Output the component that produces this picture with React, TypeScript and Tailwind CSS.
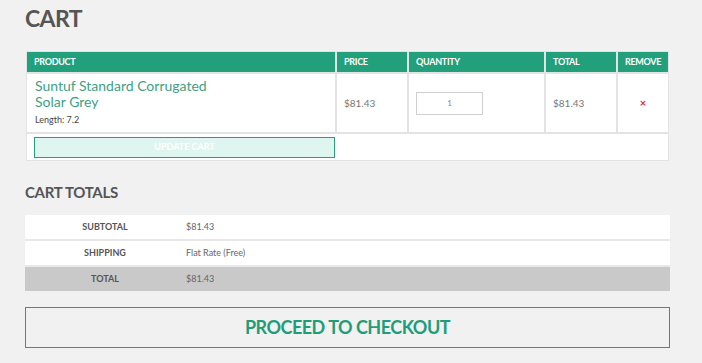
import React from "react";

const GREEN = "bg-[#21a07b]";

interface CartItem {
    name: string[];
    length: string;
    price: string;
    quantity: number;
    total: string;
}

const ITEM: CartItem = {
    name: ["Suntuf Standard Corrugated", "Solar Grey"],
    length: "7.2",
    price: "$81.43",
    quantity: 1,
    total: "$81.43",
};

const CAPTIONS = ["Product", "Price", "Quantity", "Total", "Remove"];

const TOTALS = [
    {label: "Subtotal", value: "$81.43", grey: false},
    {label: "Shipping", value: "Flat Rate (Free)", grey: false},
    {label: "Total", value: "$81.43", grey: true},
];

const CartTable = ({item}: {item: CartItem}) => {
    return <div className="grid grid-cols-[308px_70px_135px_70px_50px] grid-rows-[20px_58px_26px] gap-[2px] p-[1px] bg-[#e3e3e3] w-[643px]">
        {CAPTIONS.map((caption) =>
            <div key={caption} className={`${GREEN} text-white font-bold text-[9px] tracking-[-0.3px] uppercase pl-[7px] flex items-center`}>
                {caption}
            </div>
        )}
        <div className="bg-white pl-[8px] pt-[4px]">
            <div className="text-[#3d9f86] text-[14px] leading-[16px]">
                {item.name.map((line) => <div key={line}>{line}</div>)}
            </div>
            <div className="text-[9px] leading-[11px] text-[#444] mt-[4px]">Length: {item.length}</div>
        </div>
        <div className="bg-white text-[#777] text-[10px] pl-[7px] flex items-center">{item.price}</div>
        <div className="bg-white pl-[7px] flex items-center">
            <div className="w-[67px] h-[23px] border border-[#cfcfcf] flex items-center justify-center text-[8px] text-[#888]">
                {item.quantity}
            </div>
        </div>
        <div className="bg-white text-[#777] text-[10px] pl-[7px] flex items-center">{item.total}</div>
        <div className="bg-white flex items-center justify-center text-[#e0303a] text-[11px] font-bold">×</div>
        <div className="col-span-5 bg-white pl-[7px] flex items-center">
            <button className="w-[301px] h-[21px] bg-[#dff5ef] border border-[#2b9a80] text-white text-[9px] font-bold uppercase">
                Update cart
            </button>
        </div>
    </div>
}

const CartTotals = () => {
    return <div className="flex flex-col gap-[2px] bg-[#e8e8e8] w-[645px]">
        {TOTALS.map((row) =>
            <div key={row.label} className={`h-[24px] flex items-center ${row.grey ? "bg-[#c9c9c9]" : "bg-white"}`}>
                <div className="w-[160px] text-center text-[9px] font-bold uppercase text-[#555]">{row.label}</div>
                <div className="pl-[1px] text-[9px] text-[#666]">{row.value}</div>
            </div>
        )}
    </div>
}

export default function App() {
    return <div className="w-[702px] h-[363px] bg-[#f1f1f1] px-[25px] overflow-hidden"
                style={{fontFamily: "Lato, 'Open Sans', sans-serif"}}>
        <h1 className="text-[23px] font-bold text-[#555] leading-none pt-[7px] tracking-[-0.6px]">CART</h1>
        <div className="mt-[21px] ml-[1px]">
            <CartTable item={ITEM} />
        </div>
        <h2 className="mt-[24px] text-[15px] font-bold text-[#555] leading-none tracking-[-0.3px]">CART TOTALS</h2>
        <div className="mt-[15px]">
            <CartTotals />
        </div>
        <div className="mt-[16px] w-[645px] h-[41px] border border-[#2b9a80] flex items-center justify-center">
            <button className="text-[#1f9d78] text-[18px] tracking-[-0.5px] font-bold uppercase">
                Proceed to checkout
            </button>
        </div>
    </div>
}
